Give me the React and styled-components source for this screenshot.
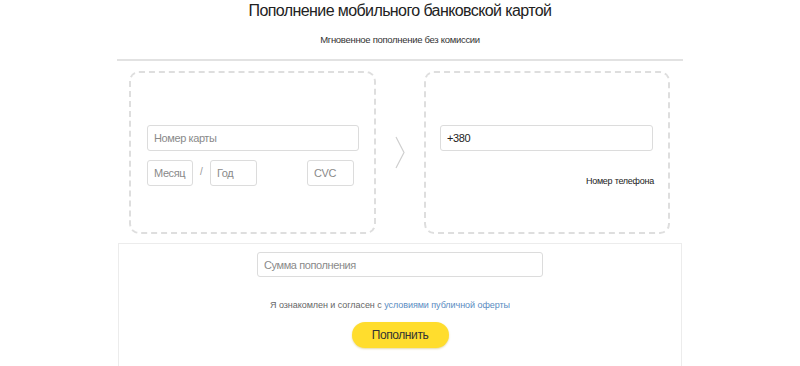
import React from "react";
import styled, { createGlobalStyle } from "styled-components";

const Global = createGlobalStyle`
  html, body { margin: 0; padding: 0; background: #fff; }
  body { font-family: "Liberation Sans", Arial, sans-serif; color: #222; }
`;

const Page = styled.div`
  width: 566px;
  margin: 0 auto;
  padding-top: 1px;
`;

const Title = styled.h1`
  margin: 0;
  font-size: 16px;
  line-height: 20px;
  letter-spacing: -0.6px;
  font-weight: normal;
  text-align: center;
  color: #222;
`;

const Subtitle = styled.p`
  margin: 13px 0 0;
  font-size: 9.5px;
  line-height: 12px;
  letter-spacing: -0.3px;
  text-align: center;
  color: #333;
`;

const Divider = styled.hr`
  margin: 13px 0 0;
  border: 0;
  height: 2px;
  background: #e2e2e2;
`;

const CardsRow = styled.div`
  display: flex;
  align-items: center;
  padding: 0 12px;
  margin-top: 10px;
`;

const DashedBox = styled.div`
  box-sizing: border-box;
  flex: none;
  width: ${(p) => p.$w}px;
  height: 163px;
  border: 2px dashed #dedede;
  border-radius: 10px;
  padding: ${(p) => p.$pad};
  display: flex;
  flex-direction: column;
`;

const ArrowSlot = styled.div`
  flex: none;
  width: 48px;
  display: flex;
  justify-content: center;
  align-items: center;
`;

const Input = styled.input`
  box-sizing: border-box;
  width: ${(p) => p.$w}px;
  height: 26px;
  border: 1px solid #dcdcdc;
  border-radius: 3px;
  padding: 0 6px;
  font-family: "Liberation Sans", Arial, sans-serif;
  font-size: 11px;
  letter-spacing: -0.4px;
  color: #222;
  background: #fff;
  outline: none;
  &::placeholder { color: #8a8a8a; }
`;

const DateRow = styled.div`
  display: flex;
  align-items: center;
  margin-top: 9px;
`;

const Slash = styled.span`
  width: 17px;
  text-align: center;
  font-size: 10px;
  color: #999;
  margin-top: -4px;
`;

const Spacer = styled.div`
  width: 50px;
`;

const PhoneLabel = styled.div`
  margin-top: 25px;
  text-align: right;
  font-size: 9px;
  letter-spacing: -0.25px;
  color: #222;
`;

const Bottom = styled.div`
  box-sizing: border-box;
  margin: 9px 1px 0;
  border: 1px solid #ececec;
  border-bottom: 0;
  height: 130px;
  display: flex;
  flex-direction: column;
  align-items: center;
  padding-top: 8px;
`;

const SumInput = styled(Input)`
  height: 25px;
`;

const Agree = styled.p`
  margin: 22px 20px 0 0;
  font-size: 9px;
  line-height: 12px;
  letter-spacing: -0.05px;
  color: #666;
`;

const Link = styled.a`
  color: #5a8cc2;
  text-decoration: none;
`;

const Button = styled.button`
  margin-top: 11px;
  width: 97px;
  height: 26px;
  border: 0;
  border-radius: 13px;
  background: #ffdd2d;
  box-shadow: 0 1px 2px rgba(180, 150, 0, 0.35);
  font-family: "Liberation Sans", Arial, sans-serif;
  font-size: 12px;
  letter-spacing: -0.4px;
  color: #333;
  cursor: pointer;
`;

export default function App() {
  return (
    <>
      <Global />
      <Page>
        <Title>Пополнение мобильного банковской картой</Title>
        <Subtitle>Мгновенное пополнение без комиссии</Subtitle>
        <Divider />
        <CardsRow>
          <DashedBox $w={247} $pad="52px 15px 0 16px">
            <Input $w={212} placeholder="Номер карты" />
            <DateRow>
              <Input $w={46} placeholder="Месяц" />
              <Slash>/</Slash>
              <Input $w={47} placeholder="Год" />
              <Spacer />
              <Input $w={47} placeholder="CVC" />
            </DateRow>
          </DashedBox>
          <ArrowSlot>
            <svg width="10" height="33" viewBox="0 0 10 33">
              <path d="M1 1 L9 16.5 L1 32" fill="none" stroke="#cfcfcf" strokeWidth="1.2" />
            </svg>
          </ArrowSlot>
          <DashedBox $w={246} $pad="52px 14px 0 14px">
            <Input $w={213} defaultValue="+380" />
            <PhoneLabel>Номер телефона</PhoneLabel>
          </DashedBox>
        </CardsRow>
        <Bottom>
          <SumInput $w={286} placeholder="Сумма пополнения" />
          <Agree>
            Я ознакомлен и согласен с <Link href="#">условиями публичной оферты</Link>
          </Agree>
          <Button>Пополнить</Button>
        </Bottom>
      </Page>
    </>
  );
}
